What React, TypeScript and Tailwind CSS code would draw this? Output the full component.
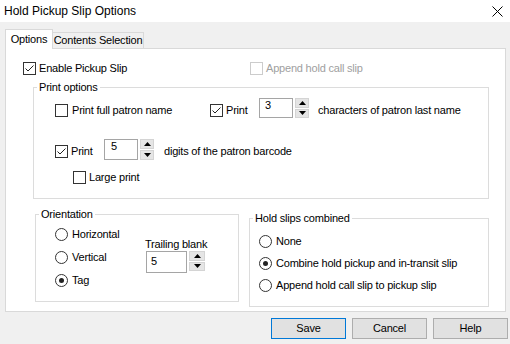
import React from "react";

function Check({ checked = false, disabled = false }: { checked?: boolean; disabled?: boolean }) {
  return (
    <span
      className={`flex h-[13px] w-[13px] shrink-0 items-center justify-center border bg-white ${
        disabled ? "border-[#cccccc]" : "border-[#333333]"
      }`}
    >
      {checked && (
        <svg width="11" height="11" viewBox="0 0 11 11">
          <path d="M1.5 5.5 L4 8 L9.5 2.5" fill="none" stroke="#222" strokeWidth="1" />
        </svg>
      )}
    </span>
  );
}

function Radio({ checked = false }: { checked?: boolean }) {
  return (
    <span className="flex h-[13px] w-[13px] shrink-0 items-center justify-center rounded-full border border-[#333333] bg-white">
      {checked && <span className="h-[5px] w-[5px] rounded-full bg-[#222]" />}
    </span>
  );
}

function Arrow({ up }: { up?: boolean }) {
  return (
    <svg width="7" height="4" viewBox="0 0 7 4">
      <path d={up ? "M0 4 L3.5 0 L7 4 Z" : "M0 0 L3.5 4 L7 0 Z"} fill="#000" />
    </svg>
  );
}

function Spinner({ className }: { className: string }) {
  return (
    <div className={`flex shrink-0 flex-col gap-px ${className}`}>
      <div className="flex flex-1 items-center justify-center border border-[#d4d4d4] bg-[#e5e5e5]">
        <Arrow up />
      </div>
      <div className="flex flex-1 items-center justify-center border border-[#d4d4d4] bg-[#e5e5e5]">
        <Arrow />
      </div>
    </div>
  );
}

function Group({ label, className, children }: { label: string; className: string; children: React.ReactNode }) {
  return (
    <fieldset className={`border border-[#dcdcdc] ${className}`}>
      <legend className="ml-[3px] px-[2px] leading-[14px]">{label}</legend>
      {children}
    </fieldset>
  );
}

function Button({ label, primary }: { label: string; primary?: boolean }) {
  return (
    <button
      className={`flex h-[21px] w-[75px] items-center justify-center border bg-[#e1e1e1] ${
        primary ? "border-[#0078d7]" : "border-[#adadad]"
      }`}
    >
      {label}
    </button>
  );
}

export default function App() {
  return (
    <div className="flex h-[344px] w-[510px] flex-col overflow-hidden bg-[#f0f0f0] font-['Liberation_Sans',Arial,sans-serif] text-[11px] leading-[13px] tracking-[-0.2px] text-black">
      {/* title bar */}
      <div className="flex h-[22px] items-center justify-between bg-white pl-[4px] pr-[7px]">
        <span className="text-[12px] tracking-normal">Hold Pickup Slip Options</span>
        <svg width="11" height="11" viewBox="0 0 11 11">
          <path d="M0.5 0.5 L10.5 10.5 M10.5 0.5 L0.5 10.5" stroke="#000" strokeWidth="1" />
        </svg>
      </div>

      {/* tabs */}
      <div className="flex h-[26px] items-end pl-[5px]">
        <div className="relative z-10 mb-[-1px] flex h-[20px] w-[48px] items-center justify-center border border-b-0 border-[#d9d9d9] bg-white">
          Options
        </div>
        <div className="-ml-px flex h-[16px] w-[92px] items-center justify-center border border-b-0 border-[#d9d9d9] bg-[#f0f0f0]">
          Contents Selection
        </div>
      </div>

      {/* panel */}
      <div className="ml-[5px] flex h-[264px] w-[501px] flex-col border border-[#d9d9d9] bg-white">
        <div className="mt-[13px] flex items-center pl-[17px]">
          <label className="flex w-[227px] items-center gap-[3px]">
            <Check checked />
            <span>Enable Pickup Slip</span>
          </label>
          <label className="flex items-center gap-[3px] text-[#a0a0a0]">
            <Check disabled />
            <span>Append hold call slip</span>
          </label>
        </div>

        <Group label="Print options" className="mt-[5px] ml-[27px] h-[119px] w-[456px]">
          <div className="mt-[4px] flex h-[25px] items-center pl-[21px]">
            <label className="flex w-[155px] items-center gap-[4px]">
              <Check />
              <span>Print full patron name</span>
            </label>
            <label className="flex w-[49px] items-center gap-[3px]">
              <Check checked />
              <span>Print</span>
            </label>
            <div className="mb-[5px] flex items-stretch gap-[2px]">
              <div className="h-[20px] w-[34px] border border-[#a5a5a5] bg-white pl-[5px]">3</div>
              <Spinner className="h-[20px] w-[14px]" />
            </div>
            <span className="ml-[9px]">characters of patron last name</span>
          </div>

          <div className="mt-[16px] flex h-[25px] items-center pl-[21px]">
            <label className="flex w-[49px] items-center gap-[3px]">
              <Check checked />
              <span>Print</span>
            </label>
            <div className="mb-[5px] flex items-stretch gap-[2px]">
              <div className="h-[21px] w-[34px] border border-[#a5a5a5] bg-white pl-[6px]">5</div>
              <Spinner className="h-[21px] w-[14px]" />
            </div>
            <span className="ml-[10px]">digits of the patron barcode</span>
          </div>

          <div className="mt-[7px] flex items-center pl-[39px]">
            <label className="flex items-center gap-[3px]">
              <Check />
              <span>Large print</span>
            </label>
          </div>
        </Group>

        <div className="mt-[8px] flex items-start">
          <Group label="Orientation" className="ml-[29px] h-[95px] w-[204px]">
            <div className="flex pl-[19px]">
              <div className="mt-[7px] flex w-[90px] flex-col gap-[10px]">
                <label className="flex items-center gap-[4px]">
                  <Radio />
                  <span>Horizontal</span>
                </label>
                <label className="flex items-center gap-[4px]">
                  <Radio />
                  <span>Vertical</span>
                </label>
                <label className="flex items-center gap-[4px]">
                  <Radio checked />
                  <span>Tag</span>
                </label>
              </div>
              <div className="mt-[17px] flex flex-col">
                <span>Trailing blank</span>
                <div className="flex items-start gap-[2px] pl-px">
                  <div className="h-[22px] w-[41px] border border-[#a5a5a5] bg-white pt-[3px] pl-[4px]">5</div>
                  <Spinner className="h-[20px] w-[16px]" />
                </div>
              </div>
            </div>
          </Group>

          <Group label="Hold slips combined" className="mt-[4px] ml-[10px] h-[96px] w-[240px]">
            <div className="mt-[10px] flex flex-col gap-[9px] pl-[9px]">
              <label className="flex items-center gap-[4px]">
                <Radio />
                <span>None</span>
              </label>
              <label className="flex items-center gap-[4px]">
                <Radio checked />
                <span>Combine hold pickup and in-transit slip</span>
              </label>
              <label className="flex items-center gap-[4px]">
                <Radio />
                <span>Append hold call slip to pickup slip</span>
              </label>
            </div>
          </Group>
        </div>
      </div>

      {/* buttons */}
      <div className="mt-[6px] flex justify-end gap-[6px] pr-[2px]">
        <Button label="Save" primary />
        <Button label="Cancel" />
        <Button label="Help" />
      </div>
    </div>
  );
}
